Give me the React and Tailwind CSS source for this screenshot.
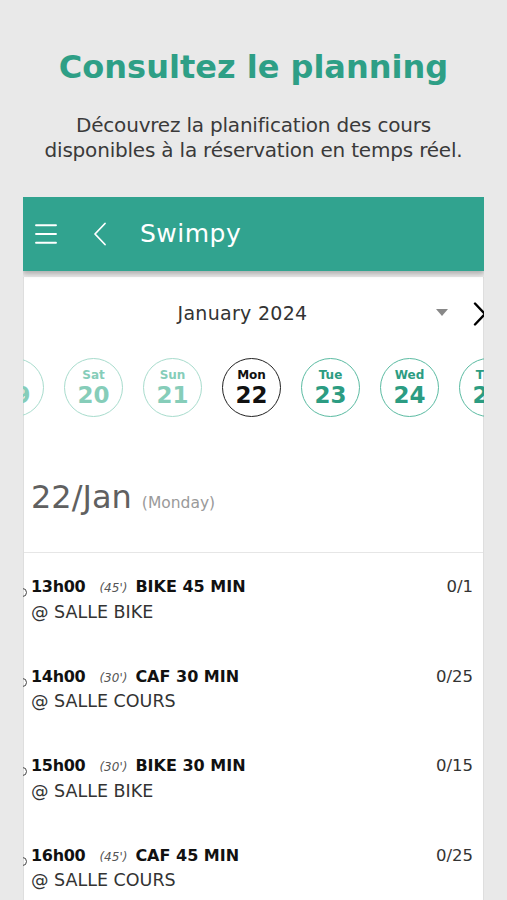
import { Menu } from 'lucide-react';

const days = [
  { name: 'Fri', num: '19', kind: 'past' },
  { name: 'Sat', num: '20', kind: 'past' },
  { name: 'Sun', num: '21', kind: 'past' },
  { name: 'Mon', num: '22', kind: 'current' },
  { name: 'Tue', num: '23', kind: 'future' },
  { name: 'Wed', num: '24', kind: 'future' },
  { name: 'Thu', num: '25', kind: 'future' },
];

const sessions = [
  { time: '13h00', dur: "(45')", title: 'BIKE 45 MIN', room: '@ SALLE BIKE', count: '0/1' },
  { time: '14h00', dur: "(30')", title: 'CAF 30 MIN', room: '@ SALLE COURS', count: '0/25' },
  { time: '15h00', dur: "(30')", title: 'BIKE 30 MIN', room: '@ SALLE BIKE', count: '0/15' },
  { time: '16h00', dur: "(45')", title: 'CAF 45 MIN', room: '@ SALLE COURS', count: '0/25' },
];

function DayCircle({ day }) {
  const styles = {
    past: 'border-[#a8dccd] text-[#86cdb9]',
    current: 'border-[#222] text-[#111]',
    future: 'border-[#5bbba2] text-[#2c9c82]',
  };
  return (
    <div
      className={`w-[59px] h-[59px] shrink-0 rounded-full border flex flex-col items-center justify-center ${styles[day.kind]}`}
    >
      <span className="text-[12px] font-bold leading-[14px]">{day.name}</span>
      <span className="text-[23px] font-bold leading-[26px]">{day.num}</span>
    </div>
  );
}

export default function App() {
  return (
    <div className="w-[507px] h-[900px] overflow-hidden bg-[#e9e9e9] font-['DejaVu_Sans',sans-serif]">
      <h1 className="pt-[45px] text-center text-[32px] font-bold leading-[44px] text-[#2e9f86]">
        Consultez le planning
      </h1>
      <p className="mt-[24px] text-center text-[20px] leading-[25px] text-[#3a3a3a] tracking-[-0.2px]">
        Découvrez la planification des cours
        <br />
        disponibles à la réservation en temps réel.
      </p>

      <div className="mt-[34px] mx-[23px] h-[800px] overflow-hidden">
        {/* header bar */}
        <div className="relative z-10 h-[74px] bg-[#31a38f] flex items-center shadow-[0_3px_5px_rgba(0,0,0,0.25)]">
          <Menu className="ml-[8px] text-white" size={30} strokeWidth={1.5} />
          <svg className="ml-[32px]" width="14" height="24" viewBox="0 0 14 24" fill="none">
            <path d="M12 1.5 L2 12 L12 22.5" stroke="white" strokeWidth="1.8" strokeLinecap="round" strokeLinejoin="round" />
          </svg>
          <span className="ml-[33px] text-[25px] text-white tracking-[0.5px]">Swimpy</span>
        </div>

        <div className="mt-[6px] bg-white h-full border-x border-[#dedede]">
          {/* month selector */}
          <div className="relative h-[72px] flex items-center justify-center pr-[22px]">
            <span className="text-[19px] text-[#333] tracking-[0.3px]">January 2024</span>
            <span className="absolute left-[412px] top-[32px] w-0 h-0 border-l-[6px] border-r-[6px] border-t-[7px] border-l-transparent border-r-transparent border-t-[#888]"></span>
            <svg className="absolute left-[449px] top-[25px]" width="14" height="24" viewBox="0 0 14 24" fill="none">
              <path d="M2 1.5 L12 12 L2 22.5" stroke="black" strokeWidth="2.4" strokeLinecap="round" strokeLinejoin="round" />
            </svg>
          </div>

          {/* date strip */}
          <div className="flex gap-[20px] ml-[-39px] mt-[9px]">
            {days.map((d) => (
              <DayCircle key={d.num} day={d} />
            ))}
          </div>

          {/* day title */}
          <div className="mt-[56px] pl-[7px] flex items-baseline gap-[10px]">
            <span className="text-[32px] text-[#606060]">22/Jan</span>
            <span className="text-[15.5px] text-[#9a9a9a]">(Monday)</span>
          </div>

          <div className="mt-[31px] border-t border-[#e6e6e6]"></div>

          {/* sessions */}
          <div className="pt-[22px]">
            {sessions.map((s) => (
              <div key={s.time} className="relative h-[89.5px] pl-[7px] pr-[10px]">
                <span className="absolute left-[-6px] top-[13px] w-[9px] h-[9px] rounded-full border border-[#444]"></span>
                <div className="flex items-baseline">
                  <span className="text-[16px] font-bold text-[#111] tracking-[-0.3px]">{s.time}</span>
                  <span className="ml-[14px] text-[12px] italic text-[#555]">{s.dur}</span>
                  <span className="ml-[8px] text-[16px] font-bold text-[#111]">{s.title}</span>
                  <span className="ml-auto text-[16.5px] text-[#333]">{s.count}</span>
                </div>
                <div className="mt-[-1px] text-[17.5px] text-[#333]">{s.room}</div>
              </div>
            ))}
          </div>
        </div>
      </div>
    </div>
  );
}
